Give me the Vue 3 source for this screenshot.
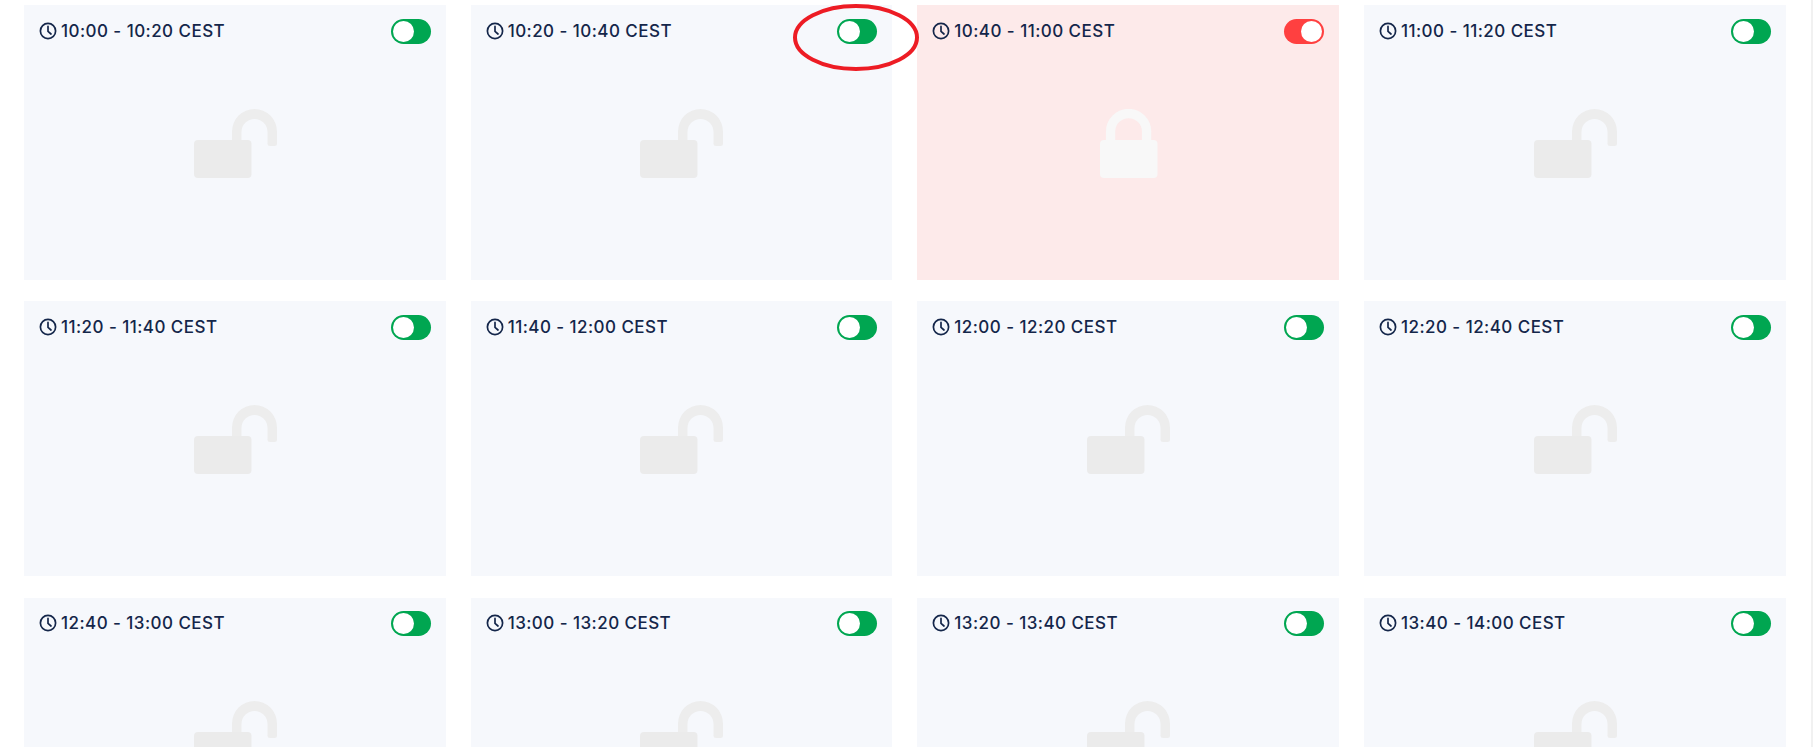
<script setup>
const slots = [
  ['10:00 - 10:20 CEST', false], ['10:20 - 10:40 CEST', false], ['10:40 - 11:00 CEST', true], ['11:00 - 11:20 CEST', false],
  ['11:20 - 11:40 CEST', false], ['11:40 - 12:00 CEST', false], ['12:00 - 12:20 CEST', false], ['12:20 - 12:40 CEST', false],
  ['12:40 - 13:00 CEST', false], ['13:00 - 13:20 CEST', false], ['13:20 - 13:40 CEST', false], ['13:40 - 14:00 CEST', false],
].map(([time, locked]) => ({ time, locked }))
</script>

<template>
  <div class="page">
    <div class="grid">
      <div v-for="s in slots" :key="s.time" class="card" :class="{ locked: s.locked }">
        <div class="head">
          <span class="time">
            <svg class="clock" width="18" height="18" viewBox="0 0 18 18" fill="none" stroke="#14264a" stroke-width="1.7" stroke-linecap="round" stroke-linejoin="round">
              <circle cx="9" cy="9" r="7.6" />
              <path d="M9 4.4V9.4L12 12" />
            </svg>
            {{ s.time }}
          </span>
          <span class="toggle"><span class="knob"></span></span>
        </div>
        <svg class="lock" width="84" height="70" viewBox="0 0 84 70">
          <template v-if="s.locked">
            <path d="M24.6 34V22.5a18 18 0 0 1 36 0V34" fill="none" stroke="#f8f8f8" stroke-width="9.3" />
            <rect x="14" y="31" width="57.5" height="38" rx="4" fill="#f8f8f8" />
          </template>
          <template v-else>
            <path d="M39 34V22.5a22.5 22.5 0 0 1 45 0V34.5a2.5 2.5 0 0 1-2.5 2.5h-4.5a2.5 2.5 0 0 1-2.5-2.5V23a13 13 0 0 0-26 0V34z" fill="#ededed" />
            <rect x="1" y="31" width="57.5" height="38" rx="4" fill="#ebebeb" />
          </template>
        </svg>
      </div>
    </div>
    <div class="scrollbar"></div>
    <svg class="mark" width="134" height="76" viewBox="0 0 134 76" fill="none">
      <ellipse cx="66" cy="37.5" rx="61" ry="31.5" stroke="#ed1c24" stroke-width="4" />
    </svg>
  </div>
</template>

<style scoped>
.page {
  position: relative;
  display: flex;
  height: 747px;
  overflow: hidden;
  background: #fff;
}
.grid {
  flex: 1;
  display: grid;
  grid-template-columns: repeat(4, 1fr);
  grid-auto-rows: 275px;
  align-content: start;
  column-gap: 25px;
  row-gap: 21.4px;
  padding: 4.8px 25.33px 0 24px;
}
.scrollbar {
  flex: none;
  width: 2px;
  background: #f1f1f1;
}
.card {
  display: flex;
  flex-direction: column;
  background: #f6f8fc;
}
.card.locked {
  background: #fdeaea;
}
.head {
  display: flex;
  justify-content: space-between;
  align-items: flex-start;
  padding: 13.8px 15px 0;
}
.time {
  display: flex;
  align-items: center;
  gap: 4px;
  height: 24px;
  font-family: Inter, "Liberation Sans", sans-serif;
  font-size: 17px;
  font-weight: 500;
  letter-spacing: 0.45px;
  color: #14264a;
  white-space: nowrap;
}
.clock {
  flex: none;
}
.toggle {
  display: flex;
  justify-content: flex-start;
  width: 40px;
  height: 25px;
  padding: 2px;
  box-sizing: border-box;
  border-radius: 13px;
  background: #00a651;
}
.locked .toggle {
  justify-content: flex-end;
  background: #ff4040;
}
.knob {
  width: 21px;
  height: 21px;
  border-radius: 50%;
  background: #fff;
}
.lock {
  align-self: center;
  margin-top: 65px;
}
.mark {
  position: absolute;
  left: 790px;
  top: 0;
}
</style>
